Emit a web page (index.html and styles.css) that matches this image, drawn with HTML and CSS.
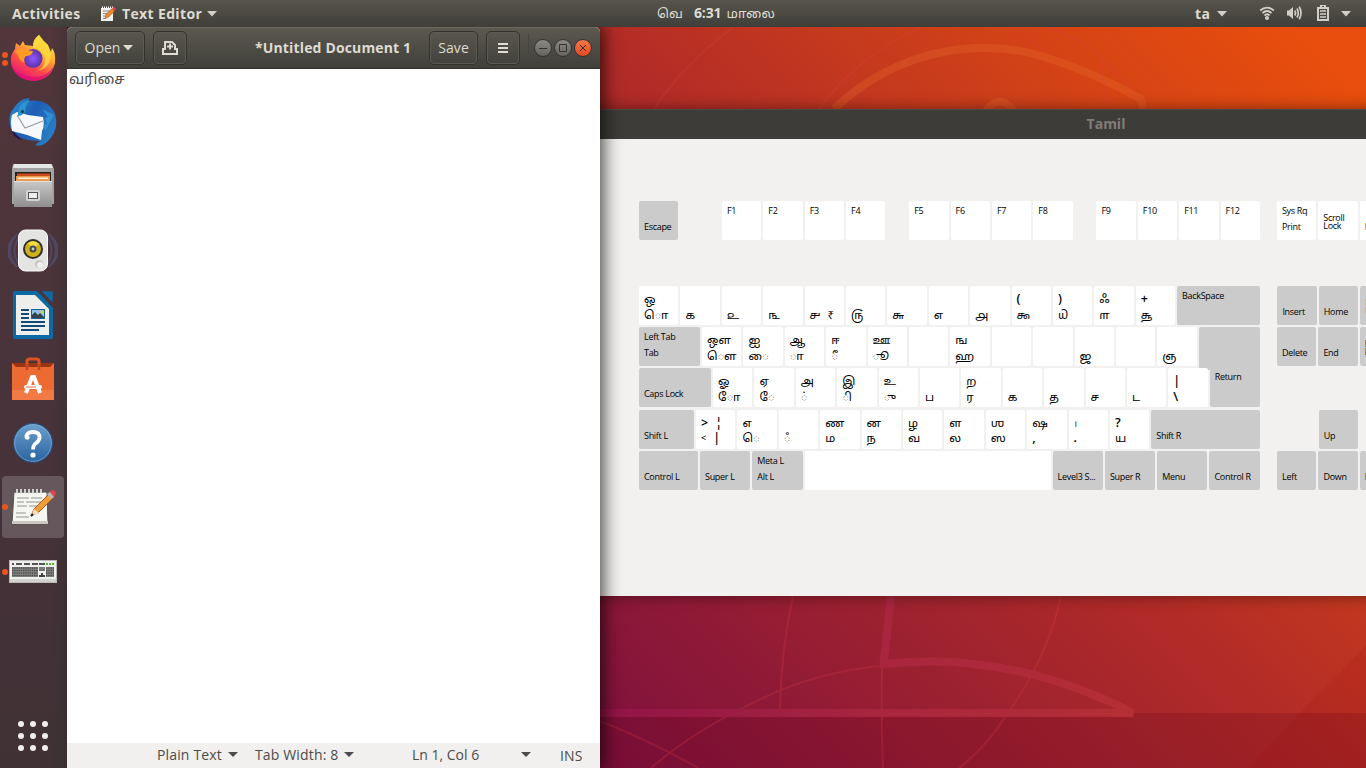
FILE: index.html
```html
<!DOCTYPE html>
<html lang="ta">
<head>
<meta charset="utf-8">
<title>Desktop</title>
<link rel="stylesheet" href="styles.css">
</head>
<body>
<div class="desktop">
<svg class="wallpaper" width="1366" height="768" viewBox="0 0 1366 768">
  <defs>
    <linearGradient id="bg" gradientUnits="userSpaceOnUse" x1="500" y1="700" x2="1240" y2="-40">
      <stop offset="0" stop-color="#7c0f40"/><stop offset=".135" stop-color="#8a1739"/><stop offset=".33" stop-color="#9e222f"/><stop offset=".52" stop-color="#b32c27"/><stop offset=".65" stop-color="#c2371f"/><stop offset=".79" stop-color="#d24217"/><stop offset="1" stop-color="#e94e0c"/>
    </linearGradient>
    <linearGradient id="band" gradientUnits="userSpaceOnUse" x1="600" y1="0" x2="1140" y2="0">
      <stop offset="0" stop-color="#921347"/><stop offset=".5" stop-color="#a8253f"/><stop offset="1" stop-color="#b52f34"/>
    </linearGradient>
  </defs>
  <rect width="1366" height="768" fill="url(#bg)"/>
  <path d="M1132 713H1366V768H600V713Z" fill="#600018" fill-opacity=".2"/>
  <path d="M1366 645L1247 768H1366Z" fill="#900000" fill-opacity=".1"/>
  <g fill="none" stroke="#e0404a" stroke-opacity=".22" stroke-width="2.2">
    <path d="M733 27Q682 66 654 109M920 27Q854 60 819 109M1013 27L1047 53M1049 27Q1090 45 1102 58Q1130 85 1147 109M1101 58Q1103 85 1109 109"/>
    <path d="M793 596Q781 650 780 709M882 668Q881 720 883 768M1061 596Q1048 658 1005 717Q988 745 959 768M878 666Q825 672 781 690Q700 725 651 768M600 721Q655 743 698 768"/>
  </g>
  <path d="M834 109C905 42 990 40 1045 57Q1095 73 1141 99L1143 109M986 111Q1000 92 1014 111" fill="none" stroke="#e66a2c" stroke-opacity=".32" stroke-width="8"/>
  <path d="M891 596L883.500 664Q1010 650 1133 713H600" fill="none" stroke="url(#band)" stroke-width="8"/>
</svg>

<section class="window keyboard">
  <header class="kb-title">Tamil</header>
  <div class="kb-body">
    <div class="row row-f">
      <div class="key dark esc"><i></i><b>Escape</b></div>
      <div class="key"><b>F1</b></div><div class="key"><b>F2</b></div><div class="key"><b>F3</b></div><div class="key f4"><b>F4</b></div>
      <div class="key"><b>F5</b></div><div class="key"><b>F6</b></div><div class="key"><b>F7</b></div><div class="key f4"><b>F8</b></div>
      <div class="key"><b>F9</b></div><div class="key"><b>F10</b></div><div class="key"><b>F11</b></div><div class="key"><b>F12</b></div>
      <div class="key nav"><b>Sys Rq</b><b>Print</b></div><div class="key"><b class="stack">Scroll<br>Lock</b></div><div class="key"><i></i><b>Pause</b></div>
    </div>
    <div class="row row-n">
      <div class="key"><s>ஒ</s><s>ொ</s></div><div class="key"><s></s><s>௧</s></div><div class="key"><s></s><s>௨</s></div><div class="key"><s></s><s>௩</s></div>
      <div class="key"><s></s><s>௪<u>₹</u></s></div><div class="key"><s></s><s>௫</s></div><div class="key"><s></s><s>௬</s></div><div class="key"><s></s><s>௭</s></div>
      <div class="key"><s></s><s>௮</s></div><div class="key"><s class="sym">(</s><s>௯</s></div><div class="key"><s class="sym">)</s><s>௰</s></div><div class="key"><s>ஃ</s><s>௱</s></div>
      <div class="key"><s class="sym">+</s><s>௲</s></div><div class="key dark grow"><b>BackSpace</b></div>
      <div class="key dark nav"><i></i><b>Insert</b></div><div class="key dark"><i></i><b>Home</b></div><div class="key dark"><b class="stack">Page<br>Up</b></div>
    </div>
    <div class="row">
      <div class="key dark tab"><b>Left Tab</b><b>Tab</b></div><div class="key"><s>ஔ</s><s>ௌ</s></div><div class="key"><s>ஐ</s><s>ை</s></div><div class="key"><s>ஆ</s><s>ா</s></div>
      <div class="key"><s>ஈ</s><s>ீ</s></div><div class="key"><s>ஊ</s><s>ூ</s></div><div class="key"></div><div class="key"><s>ங</s><s>ஹ</s></div><div class="key"></div><div class="key"></div>
      <div class="key"><s></s><s>ஜ</s></div><div class="key"></div><div class="key"><s></s><s>ஞ</s></div>
      <div class="key dark grow ret-top"></div>
      <div class="key dark nav"><i></i><b>Delete</b></div><div class="key dark"><i></i><b>End</b></div><div class="key dark"><b class="stack">Page<br>Down</b></div>
    </div>
    <div class="row">
      <div class="key dark caps"><i></i><b>Caps Lock</b></div><div class="key"><s>ஓ</s><s>ோ</s></div><div class="key"><s>ஏ</s><s>ே</s></div><div class="key"><s>அ</s><s>்</s></div>
      <div class="key"><s>இ</s><s>ி</s></div><div class="key"><s>உ</s><s>ு</s></div><div class="key"><s></s><s>ப</s></div><div class="key"><s>ற</s><s>ர</s></div><div class="key"><s></s><s>க</s></div>
      <div class="key"><s></s><s>த</s></div><div class="key"><s></s><s>ச</s></div><div class="key"><s></s><s>ட</s></div><div class="key"><s class="sym">|</s><s class="sym">\</s></div>
      <div class="key dark grow ret"><b>Return</b></div><div class="void"></div>
    </div>
    <div class="row row-s">
      <div class="key dark shift"><i></i><b>Shift L</b></div><div class="key"><s class="sym">&gt;<u>¦</u></s><s class="sym"><small>&lt;</small><u>|</u></s></div><div class="key"><s>எ</s><s>ெ</s></div><div class="key"><s></s><s>ஂ</s></div>
      <div class="key"><s>ண</s><s>ம</s></div><div class="key"><s>ன</s><s>ந</s></div><div class="key"><s>ழ</s><s>வ</s></div><div class="key"><s>ள</s><s>ல</s></div><div class="key"><s>ஶ</s><s>ஸ</s></div>
      <div class="key"><s>ஷ</s><s class="sym">,</s></div><div class="key"><s class="danda">।</s><s class="sym">.</s></div><div class="key"><s class="sym">?</s><s>ய</s></div>
      <div class="key dark grow"><i></i><b>Shift R</b></div><div class="void"><div class="key dark up"><i></i><b>Up</b></div></div>
    </div>
    <div class="row row-c">
      <div class="key dark ctl"><i></i><b>Control L</b></div><div class="key dark mod"><i></i><b>Super L</b></div><div class="key dark mod"><b>Meta L</b><b>Alt L</b></div>
      <div class="key space"></div>
      <div class="key dark mod"><i></i><b>Level3 S...</b></div><div class="key dark mod"><i></i><b>Super R</b></div><div class="key dark mod"><i></i><b>Menu</b></div><div class="key dark grow"><i></i><b>Control R</b></div>
      <div class="key dark nav"><i></i><b>Left</b></div><div class="key dark"><i></i><b>Down</b></div><div class="key dark"><i></i><b>Right</b></div>
    </div>
  </div>
</section>

<section class="window editor">
  <header class="ed-head">
    <div class="btn open"><span class="t-open">Open</span><svg width="10" height="6"><path d="M0 0H10L5 5.500Z" fill="#dfdbd2"/></svg></div>
    <div class="btn newdoc"><svg width="18" height="16" viewBox="0 0 18 16" fill="none" stroke="#dfdbd2" stroke-width="2"><path d="M4 10V2H11L14 5V10M4 9H2V14H16V9H14"/><path d="M9 3.500V9.500M6 6.500H12"/></svg></div>
    <div class="ed-name"><span class="t-name">*Untitled Document 1</span></div>
    <div class="btn save"><span class="t-save">Save</span></div>
    <div class="btn menu"><svg width="10" height="10"><path d="M0 1H10M0 5H10M0 9H10" stroke="#dfdbd2" stroke-width="2"/></svg></div>
    <div class="wm">
      <svg width="60" height="20" viewBox="0 0 60 20" fill="none">
        <defs><linearGradient id="g1" x2="0" y2="1"><stop stop-color="#8c8b85"/><stop offset="1" stop-color="#63625c"/></linearGradient><linearGradient id="g2" x2="0" y2="1"><stop stop-color="#f5784f"/><stop offset="1" stop-color="#e2481b"/></linearGradient></defs>
        <g stroke="#33322e"><circle cx="10" cy="10" r="8.500" fill="url(#g1)"/><circle cx="30" cy="10" r="8.500" fill="url(#g1)"/><circle cx="50" cy="10" r="8.500" fill="url(#g2)"/>
        <path d="M6 10.500H14M26.500 6.500H33.500V13.500H26.500ZM47 7L53 13M53 7L47 13"/></g>
      </svg>
    </div>
  </header>
  <div class="ed-text"><span>வரிசை</span></div>
  <footer class="status">
    <span class="st s1"><span>Plain Text</span></span><svg class="c1" width="10" height="6"><path d="M0 0H10L5 5Z" fill="#4c4c4c"/></svg>
    <span class="st s2"><span>Tab Width: 8</span></span><svg class="c2" width="10" height="6"><path d="M0 0H10L5 5Z" fill="#4c4c4c"/></svg>
    <span class="st s3"><span>Ln 1, Col 6</span></span><svg class="c3" width="10" height="6"><path d="M0 0H10L5 5Z" fill="#4c4c4c"/></svg>
    <span class="st s4"><span>INS</span></span>
  </footer>
</section>

<nav class="dock">
  <div class="app"><em></em><em></em>
    <svg width="48" height="48" viewBox="0 0 48 48">
      <defs><linearGradient id="ff" x1=".8" y1=".1" x2=".3" y2="1"><stop stop-color="#fff044"/><stop offset=".35" stop-color="#ffa436"/><stop offset=".65" stop-color="#ff4a4a"/><stop offset="1" stop-color="#e2127a"/></linearGradient><radialGradient id="fp"><stop stop-color="#9059ff"/><stop offset="1" stop-color="#5b32a8"/></radialGradient></defs>
      <path d="M30 1Q25 5 24 12L16 11L14 7L11 12L7 9Q6 13 6 15Q1 21 2 29Q5 45 24 47Q42 46 46 29Q47 19 43 14L42 18L39 11Q34 7 30 1Z" fill="url(#ff)"/>
      <path d="M3 32Q6 45 24 47Q40 46 45 32Q38 43 26 43Q10 43 3 32Z" fill="#df0d78" opacity=".7"/>
      <path d="M30 1Q23 5 24 14Q34 15 36 25Q36 34 28 37Q42 34 42 19Q38 16 39 11Q34 7 30 1Z" fill="#ffd83c" opacity=".85"/>
      <circle cx="24" cy="24.500" r="9.500" fill="url(#fp)"/>
      <path d="M6 17Q12 13 17 16L24 17Q23 22 17 22Q14 25 16 29Q10 27 9 21Z" fill="#ff9a24"/>
    </svg></div>
  <div class="app">
    <svg width="50" height="50" viewBox="0 0 50 50">
      <defs><linearGradient id="tb" x2="1" y2=".6"><stop stop-color="#2f8fd8"/><stop offset=".5" stop-color="#1d5eb4"/><stop offset="1" stop-color="#2a7cc6"/></linearGradient></defs>
      <path d="M9 7Q14 1 22 1L20 4Q40 1 47 17Q52 34 38 46Q33 50 27 48L32 44Q14 44 5 36Q-1 25 3 15Z" fill="url(#tb)"/>
      <path d="M3 32L14 43Q5 41 3 32Z" fill="#271052"/>
      <path d="M4 18L9 15L20 18L35 20Q37 29 34 34L33 43Q18 37 4 34Q2 25 4 18Z" fill="#f7f8fb"/>
      <path d="M9 18L17 31L35 24" fill="none" stroke="#9a9ca5" stroke-width="1.200"/>
      <path d="M10 17Q10 5 22 3Q17 9 17 15Q14 19 10 19Z" fill="#2b94ce"/><circle cx="14.500" cy="14.500" r="1.500" fill="#243040"/>
      <path d="M34 12L40 20L37 21L39 27L35 28L37 34L46 18Z" fill="#3ea0e0" opacity=".6"/>
    </svg></div>
  <div class="app">
    <svg width="44" height="44" viewBox="0 0 44 44">
      <defs><linearGradient id="ca" x2="0" y2="1"><stop stop-color="#c9c9c9"/><stop offset="1" stop-color="#8e8e8e"/></linearGradient></defs>
      <path d="M2 0H41L43 5V40H1V5Z" fill="#a3a3a3"/><path d="M3 0H40L42 4H2Z" fill="#e6e6e6"/>
      <rect x="4" y="8" width="36" height="10" fill="#262220"/><rect x="6" y="9.500" width="33" height="3" fill="#c84c1c"/><rect x="5" y="12" width="34" height="5" fill="#ee9a4c"/><rect x="7" y="13.500" width="30" height="1.500" fill="#fff3df"/>
      <rect x="3" y="17" width="38" height="26" fill="url(#ca)"/><path d="M3 17.500H41" stroke="#e2e2e2"/>
      <rect x="15" y="26" width="14" height="11" rx="2" fill="#d5d5d5"/><rect x="17.500" y="28.500" width="9" height="6" fill="#eee" stroke="#555"/>
    </svg></div>
  <div class="app">
    <svg width="50" height="48" viewBox="0 0 50 48">
      <g fill="none" stroke="#5878b8" stroke-opacity=".3" stroke-width="2"><path d="M9 7Q-5 24 9 40M6 10Q-6 24 6 37M13 7Q0 24 13 40M41 7Q55 24 41 40M44 10Q56 24 44 37M37 7Q50 24 37 40"/></g>
      <rect x="10.500" y="3" width="29" height="41" rx="7" fill="#e4e4e2" stroke="#fafafa"/>
      <circle cx="25" cy="22" r="10" fill="#302e28"/><circle cx="25" cy="22" r="8" fill="#ceb21c"/><path d="M25 22L20 16Q26 12 31 17Z" fill="#f1dc48"/><circle cx="25" cy="22" r="3.500" fill="#4a4b50"/><circle cx="25" cy="22" r="1.400" fill="#ccc"/>
      <circle cx="31" cy="37" r="4" fill="#c5c5c2"/><circle cx="32" cy="38" r="3" fill="#efefef"/>
    </svg></div>
  <div class="app">
    <svg width="40" height="48" viewBox="0 0 40 48">
      <path d="M2 0H24L40 17V46Q40 48 38 48H2Q0 48 0 46V2Q0 0 2 0Z" fill="#0b69a3"/><path d="M28 0H39L40 1V12Z" fill="#0b69a3" stroke="#49363b" stroke-width=".6"/>
      <path d="M3 4H22L36 18V44H3Z" fill="#eeeeec"/>
      <g stroke="#124a78" stroke-width="2"><path d="M8 19H16M8 23H16M8 27H16M8 31H32M8 35H32M8 39H26"/></g>
      <rect x="18.500" y="18.500" width="13" height="9" fill="#8ec4e8" stroke="#17629b"/><circle cx="29" cy="21" r="1.600" fill="#e6c83a"/><path d="M19 27V24L22 21L25 24L27 22L31 26V27Z" fill="#35424c"/>
    </svg></div>
  <div class="app">
    <svg width="42" height="44" viewBox="0 0 42 44">
      <path d="M0 6H42V12H0Z" fill="#9b3415"/><path d="M15 13V4Q15 2 18 2H24Q27 2 27 4V13" fill="none" stroke="#dc5423" stroke-width="3"/>
      <path d="M0 6L4 10H38L42 6V43H0Z" fill="#ed6b32"/><path d="M0 33H42V43H0Z" fill="#f27a44"/>
      <path d="M15 13V7M27 13V7" stroke="#bc481e" stroke-width="2.500"/>
      <path d="M14 36L20 20H22L28 36" fill="none" stroke="#fff" stroke-width="4"/><rect x="12" y="28" width="18" height="4" rx="2" fill="#fff"/><path d="M14 30H24" stroke="#ed6b32"/>
    </svg></div>
  <div class="app">
    <svg width="42" height="42" viewBox="0 0 42 42">
      <defs><linearGradient id="hp" x2="0" y2="1"><stop stop-color="#6ba1cd"/><stop offset="1" stop-color="#2a62a0"/></linearGradient></defs>
      <circle cx="21" cy="21" r="19.500" fill="url(#hp)" stroke="#264f84"/><circle cx="21" cy="21" r="18.300" fill="none" stroke="#84b0d5" stroke-opacity=".6"/>
      <path d="M14.500 16Q14 10 21 10Q28 10 27.500 16Q27 19.500 23 22Q21 24 21 27.500" fill="none" stroke="#fff" stroke-width="3.800"/><circle cx="15.300" cy="15.500" r="2.300" fill="#fff"/><circle cx="21" cy="33" r="2.600" fill="#fff"/>
    </svg></div>
  <div class="app active"><em></em>
    <svg width="48" height="40" viewBox="0 0 48 40">
      <path d="M5 5H38L39 37H3Z" fill="#f6f6f2" stroke="#55504f"/><path d="M3 34H39V37H3Z" fill="#c9c8c2"/>
      <g fill="none"><path d="M8 6V2M12 6V2M16 6V2M20 6V2M24 6V2M28 6V2M32 6V2" stroke="#555" stroke-width="3"/><path d="M8 7V2M12 7V2M16 7V2M20 7V2M24 7V2M28 7V2M32 7V2" stroke="#eee" stroke-width="1.600"/></g>
      <path d="M8 11H20M22 11H33M8 15H15M17 15H32M8 19H18M20 19H29M7 26H17M7 30H20" stroke="#b5b5af" stroke-width="1.500"/>
      <path d="M22 29L25 22L41 6L45 10L30 25Z" fill="#f09c3a" stroke="#a85b19"/><path d="M25 22L30 26L22 29Z" fill="#f4dfb9"/><path d="M40 5L43 3Q47 3 47 7L45 10Z" fill="#df4350"/><path d="M38 7L42 12L45 10L41 5Z" fill="#b9b9b9"/><path d="M22 29L24 27" stroke="#222" stroke-width="2"/>
    </svg></div>
  <div class="app"><em></em>
    <svg width="48" height="23" viewBox="0 0 48 23">
      <rect x=".5" y=".5" width="47" height="22" fill="#efefed" stroke="#b9b9b6"/><path d="M1 19H47V22H1Z" fill="#d2d2cf"/>
      <g stroke="#555" fill="none"><path d="M3 4H5M7 4H13M15 4H21M23 4H29M30 4H36" stroke-width="2"/><path d="M37 4H45" stroke="#55b035" stroke-width="2" stroke-dasharray="2 1"/>
      <path d="M3 12H29M37 12H45" stroke="#898987" stroke-width="10"/></g>
      <path d="M30 7H36V11H30Z" fill="#777"/><path d="M30 15H36V17H30ZM32 13H34V15H32Z" fill="#444"/>
      <path d="M3 8H29M3 10.500H29M3 13H29M3 15.500H29M37 8H45M37 10.500H45M37 13H45M37 15.500H45" stroke="#4c4c4c" stroke-width="1.300" stroke-dasharray="1.500 .7"/>
    </svg></div>
  <div class="grid-btn">
    <svg width="32" height="32" viewBox="0 0 32 32" fill="#f0efed"><circle cx="4" cy="4" r="3"/><circle cx="16" cy="4" r="3"/><circle cx="28" cy="4" r="3"/><circle cx="4" cy="16" r="3"/><circle cx="16" cy="16" r="3"/><circle cx="28" cy="16" r="3"/><circle cx="4" cy="28" r="3"/><circle cx="16" cy="28" r="3"/><circle cx="28" cy="28" r="3"/></svg>
  </div>
</nav>

<header class="topbar">
  <div class="tb-act"><span>Activities</span></div>
  <svg class="tb-ico" width="16" height="16" viewBox="0 0 16 16"><path d="M1 2H13V15H1Z" fill="#f1f1ee"/><path d="M2 1.500H13" stroke="#fff" stroke-width="2" stroke-dasharray="1 1"/><path d="M3 5H10M3 7.500H8M3 10H5M3 12.500H5" stroke="#888"/><path d="M5 12.500L6 8.500L12 2.500L14.500 5L8.500 11Z" fill="#ee8b30" stroke="#a65a20" stroke-width=".7"/><path d="M12 2L13.500 1L16 2.500L14.500 5Z" fill="#e4404b"/></svg>
  <div class="tb-app"><span>Text Editor</span></div>
  <svg class="tb-c1" width="10" height="6"><path d="M0 0H10L5 5.500Z" fill="#d2cfc8"/></svg>
  <div class="tb-clock"><span>வெ</span><span class="time">6:31</span><span>மாலை</span></div>
  <div class="tb-lang"><span>ta</span></div>
  <svg class="tb-c2" width="10" height="6"><path d="M0 0H10L5 5.500Z" fill="#d2cfc8"/></svg>
  <svg class="tb-wifi" width="16" height="14" viewBox="0 0 16 14" fill="none" stroke="#d2cfc8" stroke-width="1.800"><path d="M1.200 4.500Q8-1.200 14.800 4.500M3.500 7Q8 3 12.500 7M5.500 9.500Q8 7 10.500 9.500" /><circle cx="8" cy="12" r="2" fill="#d2cfc8" stroke="none"/></svg>
  <svg class="tb-vol" width="17" height="14" viewBox="0 0 17 14" fill="none" stroke="#d2cfc8" stroke-width="1.700"><path d="M1 4.500H3L7 1V13L3 9.500H1Z" fill="#d2cfc8" stroke="none"/><path d="M8.800 4.500Q10.200 7 8.800 9.500M11 2.500Q13.500 7 11 11.500M13.200.800Q16.800 7 13.200 13.200"/></svg>
  <svg class="tb-bat" width="12" height="16" viewBox="0 0 12 16"><path d="M4 2V0H8V2M1 3H11V15H1Z" fill="none" stroke="#d2cfc8" stroke-width="2"/><path d="M3 6H9M3 9H9M3 12H9" stroke="#d2cfc8" stroke-width="1.600"/></svg>
  <svg class="tb-c3" width="10" height="6"><path d="M0 0H10L5 5.500Z" fill="#d2cfc8"/></svg>
</header>
</div>
</body>
</html>
```
FILE: styles.css
```css
* { box-sizing: border-box; }
body { margin: 0; overflow: hidden; font-family: "Open Sans", "Noto Sans", "Noto Sans Tamil", sans-serif; }
svg { display: block; flex: none; }
.desktop { position: relative; width: 1366px; height: 768px; overflow: hidden; background: #7c0f40; }
.wallpaper { position: absolute; left: 0; top: 0; }
.window { position: absolute; }

/* top bar */
.topbar { position: absolute; left: 0; top: 0; width: 1366px; height: 27px; display: flex; align-items: center; background: linear-gradient(#57554c, #3f3e39); color: #dfdbd2; font-weight: 700; font-size: 14px; line-height: 26px; letter-spacing: .35px; white-space: nowrap; }
.tb-act { width: 68px; margin-left: 12px; }
.tb-ico { margin-left: 20px; }
.tb-app { width: 81px; margin-left: 6px; }
.tb-c1 { margin-left: 4px; }
.tb-clock { width: 120px; margin-left: 440px; display: flex; font-weight: 400; font-size: 13.300px; line-height: 24px; height: 26px; letter-spacing: 0; }
.tb-clock .time { font-weight: 700; font-size: 14px; margin: 0 5px 0 11px; letter-spacing: -.1px; }
.tb-lang { width: 16px; margin-left: 418px; }
.tb-c2 { margin-left: 6px; }
.tb-wifi { margin-left: 32px; margin-top: -1px; }
.tb-vol { margin-left: 11px; margin-top: -1px; }
.tb-bat { margin-left: 14px; margin-top: -1px; }
.tb-c3 { margin-left: 12px; }

/* dock */
.dock { position: absolute; left: 0; top: 27px; width: 67px; height: 741px; background: linear-gradient(90deg, rgba(0,0,0,0) 75%, rgba(45,45,45,.3)), linear-gradient(#51363b, #46323a 65%, #3f3134); }
.app { position: relative; width: 62px; height: 62px; margin: 0 0 2.200px 2px; display: flex; align-items: center; justify-content: center; border-radius: 4px; }
.active { background: #66575d; }
.app em { position: absolute; left: 0; width: 6px; height: 6px; border-radius: 3px; background: #e95420; top: 28px; }
.app em:first-child:nth-last-child(3) { top: 25px; }
.app em:nth-child(2) { top: 33px; }
.grid-btn { display: flex; padding: 115px 0 0 17px; }

/* editor */
.editor { left: 67px; top: 27px; width: 533px; height: 741px; display: flex; flex-direction: column; background: #fff; border-radius: 5px 5px 0 0; box-shadow: 0 0 18px 3px rgba(0,0,0,.75); }
.ed-head { height: 42px; display: flex; align-items: center; padding-left: 8px; border-radius: 5px 5px 0 0; background: linear-gradient(#5b5950, #403f3a); border-top: 1px solid #6a685e; border-bottom: 1px solid #34332f; color: #dfdbd2; font-size: 14px; line-height: 20px; white-space: nowrap; }
.btn { height: 34px; padding-bottom: 1px; display: flex; align-items: center; justify-content: center; border: 1px solid #33322e; border-radius: 5px; box-shadow: inset 0 0 0 1px #5c5a52; }
.open { width: 70px; gap: 3px; padding-right: 2px; }
.newdoc { width: 34px; margin-left: 8px; }
.ed-name { width: 157px; margin-left: 68px; padding-bottom: 1px; font-weight: 700; letter-spacing: .15px; }
.save { width: 49px; margin-left: 17px; letter-spacing: .1px; }
.menu { width: 34px; margin-left: 8px; }
.wm { display: flex; align-items: center; height: 29px; margin-left: 8px; padding-left: 4px; border-left: 1px solid #46453f; }
.ed-text { flex: 1; padding: 0 2px; color: #4c4c4c; font-size: 14.600px; line-height: 18px; }
.status { height: 25px; display: flex; align-items: center; background: #f1f0ee; color: #4c4c4c; font-size: 14px; white-space: nowrap; line-height: 22px; padding-bottom: 2px; letter-spacing: .15px; }
.s1 { width: 65px; margin-left: 90px; }
.c1 { margin-left: 6px; }
.s2 { width: 83px; margin-left: 17px; }
.c2 { margin-left: 6px; }
.s3 { width: 67px; margin-left: 58px; letter-spacing: 0; }
.c3 { margin-left: 42px; }
.s4 { width: 23px; margin-left: 29px; padding-top: 2px; }

/* keyboard */
.keyboard { left: 591px; top: 109px; width: 1030px; height: 487px; background: #f2f1ef; box-shadow: 0 0 14px rgba(0,0,0,.45); }
.kb-title { height: 30px; background: #3d3c38; border-top: 1px solid #4b4a45; border-radius: 5px 5px 0 0; color: #807d78; font-weight: 700; font-size: 14px; line-height: 28px; text-align: center; }
.kb-body { padding: 62px 0 0 48px; display: flex; flex-direction: column; gap: 2px; }
.row { display: flex; gap: 2px; width: 815px; height: 39.200px; color: #000; }
.row-f { height: 39px; margin-bottom: 44px; }
.key { position: relative; flex: none; width: 39.400px; height: 39px; padding: 2px 0 0 5px; border-radius: 2px; background: #fff; white-space: nowrap; }
.dark { background: #cbcbcb; }
.key b, .key i { display: block; height: 16px; line-height: 16px; font-size: 9px; font-weight: 500; font-style: normal; letter-spacing: -.3px; }
.key s { display: flex; height: 15.600px; line-height: 20px; font-size: 11.700px; text-decoration: none; }
.key .sym { font-size: 12.500px; font-weight: 600; line-height: 21px; }
.key u { text-decoration: none; margin-left: 7px; }
.key .stack { line-height: 8px; padding-top: 11px; }
.key small { font-size: 9px; }
.key .danda { font-size: 9px; line-height: 24px; }
.esc { margin-right: 41.500px; }
.f4 { margin-right: 21.700px; }
.row-n .grow { width: 83px; }
.nav { margin-left: 15.300px; }
.row-f .nav { margin-left: 15px; }
.tab { width: 61px; }
.ret-top { width: 61px; height: 43px; border-radius: 2px 2px 0 0; }
.caps { width: 72px; }
.ret { width: 50.200px; padding-top: 1px; border-radius: 0 0 2px 2px; }
.shift { width: 55px; }
.row-s .grow { width: 109px; }
.up { margin-left: 56.500px; }
.ctl { width: 59px; }
.mod { width: 50.300px; }
.space { width: 246px; }
.row-c .grow { width: 50.300px; }
```
